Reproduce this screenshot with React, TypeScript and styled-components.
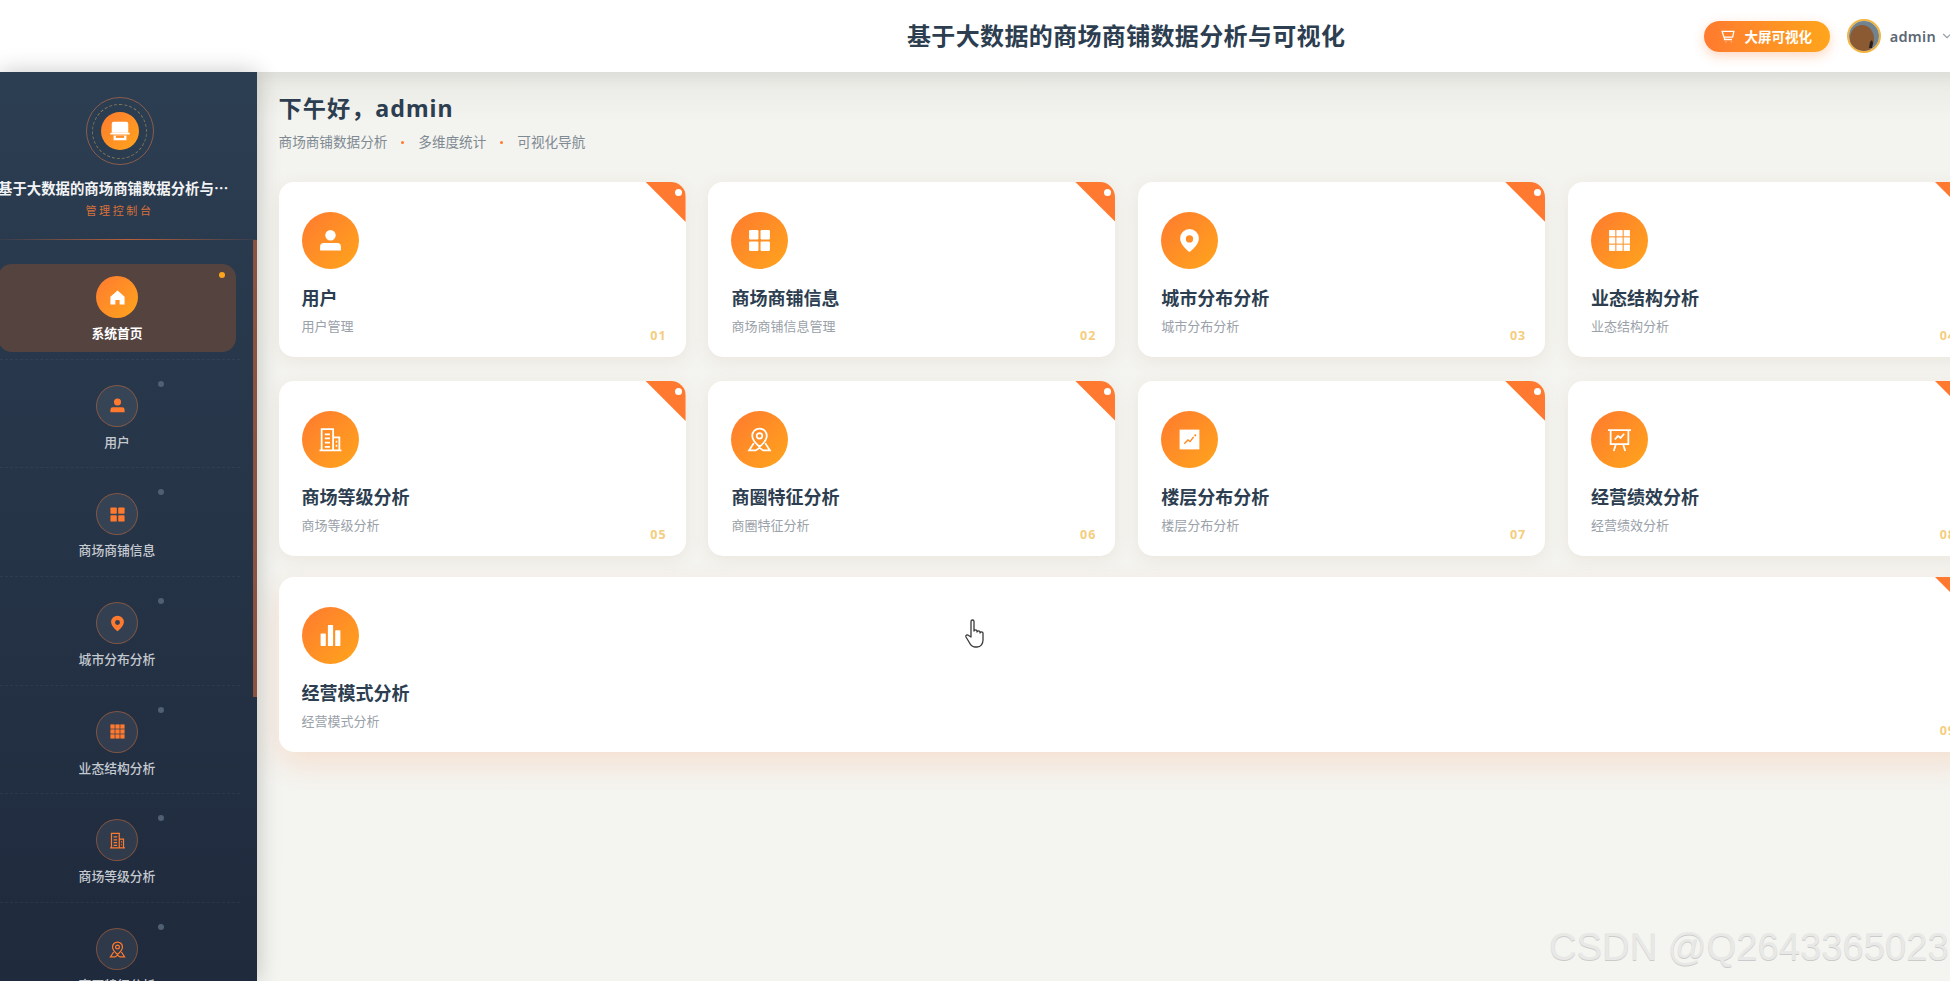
import { ChevronDown } from "lucide-react";
import type { ReactNode } from "react";
import styled, { createGlobalStyle } from "styled-components";

const GlobalStyle = createGlobalStyle`
    html, body {
        margin: 0;
        height: 100%;
        overflow: hidden;
        background: #f4f4f0;
        font-family: "Noto Sans", "Noto Sans CJK SC", sans-serif;
    }

    * {
        box-sizing: border-box;
    }
`

const Page = styled.div`
    position: relative;
    width: 2000px;
    height: 981px;
    display: flex;
    flex-direction: column;
    overflow: hidden;
`

const Header = styled.header`
    position: relative;
    z-index: 1;
    flex: none;
    height: 72px;
    display: flex;
    align-items: center;
    padding: 0 46px 0 907px;
    background: #fff;
    box-shadow: 0 2px 18px rgba(0, 0, 0, 0.08);
`

const HeaderTitle = styled.h1`
    margin: 0 auto 0 0;
    font-size: 24px;
    line-height: 32px;
    font-weight: 700;
    letter-spacing: 0.35px;
    color: #2c3e50;
    white-space: nowrap;
`

const ScreenButton = styled.button`
    width: 126px;
    height: 31px;
    margin-right: 17px;
    padding: 0;
    display: flex;
    align-items: center;
    justify-content: center;
    gap: 9px;
    border: 0;
    border-radius: 16px;
    background: linear-gradient(90deg, #ff7a2f, #ffa51c);
    box-shadow: 0 4px 12px rgba(255, 122, 47, 0.3);
    color: #fff;
    font-family: inherit;
    font-size: 13.5px;
    font-weight: 700;
`

const Avatar = styled.span`
    width: 34px;
    height: 34px;
    margin-right: 9px;
    border-radius: 50%;
    border: 2px solid #f3b53f;
    overflow: hidden;
    display: block;
`

const UserName = styled.span`
    font-size: 14.5px;
    font-weight: 600;
    letter-spacing: 0.3px;
    color: #5d6875;
    margin-right: 4px;
`

const Body = styled.div`
    flex: 1;
    min-height: 0;
    display: flex;
`

const Sidebar = styled.aside`
    position: relative;
    z-index: 2;
    flex: none;
    width: 257px;
    background: linear-gradient(180deg, #2c3e52, #1f2a3c);
    box-shadow: 0 0 22px rgba(0, 0, 0, 0.22);
    overflow: hidden;
`

const Brand = styled.div`
    width: 239px;
    height: 167px;
    padding-top: 25px;
    display: flex;
    flex-direction: column;
    align-items: center;
`

const LogoRing = styled.div`
    width: 68px;
    height: 68px;
    flex: none;
    border-radius: 50%;
    border: 1px solid rgba(255, 130, 70, 0.45);
    display: flex;
    align-items: center;
    justify-content: center;
`

const LogoDashes = styled.div`
    width: 55px;
    height: 55px;
    border-radius: 50%;
    border: 1px dashed rgba(255, 200, 90, 0.42);
    display: flex;
    align-items: center;
    justify-content: center;
`

const LogoCore = styled.div`
    width: 38px;
    height: 38px;
    border-radius: 50%;
    background: linear-gradient(135deg, #ff7a2f, #ffa51c);
    color: #fff;
    display: flex;
    align-items: center;
    justify-content: center;
`

const BrandTitle = styled.div`
    align-self: flex-start;
    width: 232px;
    margin: 13px 0 0 -2px;
    font-family: "Noto Sans CJK SC", sans-serif;
    font-size: 14.4px;
    line-height: 20px;
    font-weight: 700;
    color: #f2f3f4;
    white-space: nowrap;
    overflow: hidden;
    text-overflow: ellipsis;
`

const BrandSub = styled.div`
    margin-top: 5px;
    font-size: 11px;
    line-height: 16px;
    letter-spacing: 2.6px;
    color: #d9703a;
`

const Divider = styled.div`
    height: 1px;
    background: linear-gradient(90deg, rgba(255, 122, 47, 0.05), #b9603a 50%, rgba(255, 122, 47, 0.05));
`

const NavList = styled.nav`
    padding-top: 11px;
    width: 240px;
`

const NavRow = styled.div`
    padding: 13px 0 7px;
    border-bottom: 1px dashed rgba(255, 255, 255, 0.05);
`

const NavBox = styled.div<{ $active?: boolean }>`
    position: relative;
    width: 238px;
    height: 87.7px;
    margin-left: -2px;
    padding-top: 12px;
    display: flex;
    flex-direction: column;
    align-items: center;
    border-radius: 14px;
    background: ${(p) => (p.$active ? "#55433f" : "transparent")};
`

const NavDot = styled.span<{ $active?: boolean }>`
    position: absolute;
    top: 8px;
    left: ${(p) => (p.$active ? "221px" : "160px")};
    width: 6px;
    height: 6px;
    border-radius: 50%;
    background: ${(p) => (p.$active ? "#ffa51c" : "#4f5f74")};
`

const NavIcon = styled.span<{ $active?: boolean }>`
    width: 42px;
    height: 42px;
    flex: none;
    border-radius: 50%;
    display: flex;
    align-items: center;
    justify-content: center;
    color: ${(p) => (p.$active ? "#fff" : "#ff7a2f")};
    background: ${(p) => (p.$active ? "linear-gradient(135deg, #ff7a2f, #ffa51c)" : "rgba(255, 255, 255, 0.07)")};
    border: ${(p) => (p.$active ? "0" : "1.5px solid rgba(255, 122, 47, 0.38)")};
`

const NavLabel = styled.span<{ $active?: boolean }>`
    margin-top: 6px;
    font-size: 12.8px;
    line-height: 18px;
    font-weight: ${(p) => (p.$active ? 700 : 500)};
    color: ${(p) => (p.$active ? "#fff" : "#c5cad1")};
    white-space: nowrap;
`

const ScrollThumb = styled.span`
    position: absolute;
    top: 168px;
    right: 0;
    width: 4px;
    height: 457px;
    background: #8a5240;
`

const Main = styled.main`
    flex: 1;
    min-width: 0;
    padding: 19px 0 0 21.6px;
    background: linear-gradient(180deg, #e9e9e4 0, #f3f3ef 48px, #f4f4f0 100%);
`

const Greeting = styled.h2`
    margin: 0;
    font-size: 23.2px;
    line-height: 34px;
    font-weight: 700;
    letter-spacing: 1px;
    color: #2c3e50;
`

const Tags = styled.div`
    margin-top: 8px;
    display: flex;
    align-items: center;
    gap: 14px;
    font-size: 13.6px;
    line-height: 18px;
    color: #7f8a93;
`

const TagDot = styled.span`
    width: 3px;
    height: 3px;
    border-radius: 50%;
    background: #ff7a2f;
`

const CardGrid = styled.div`
    margin-top: 31px;
    display: grid;
    grid-template-columns: repeat(4, 407px);
    column-gap: 22.8px;
    row-gap: 24px;
`

const Card = styled.div<{ $wide?: boolean }>`
    position: relative;
    height: 175px;
    padding: 30px 23px 0;
    border-radius: 15px;
    background: #fff;
    overflow: hidden;
    grid-column: ${(p) => (p.$wide ? "1 / -1" : "auto")};
    transform: ${(p) => (p.$wide ? "translateY(-3px)" : "none")};
    box-shadow: ${(p) =>
        p.$wide ? "0 12px 28px rgba(255, 122, 47, 0.16)" : "0 4px 16px rgba(190, 150, 110, 0.12)"};
`

const Corner = styled.span`
    position: absolute;
    top: 0;
    right: 0;
    width: 40px;
    height: 40px;
    background: #ff7a30;
    clip-path: polygon(0 0, 100% 0, 100% 100%);
`

const CornerDot = styled.span`
    position: absolute;
    top: 7px;
    right: 4px;
    width: 7px;
    height: 7px;
    border-radius: 50%;
    background: #fff;
`

const CardIcon = styled.div`
    width: 57px;
    height: 57px;
    border-radius: 50%;
    display: flex;
    align-items: center;
    justify-content: center;
    color: #fff;
    background: linear-gradient(135deg, #ff7a2f, #ffa51c);
`

const CardTitle = styled.div`
    margin-top: 16px;
    font-size: 18px;
    line-height: 26px;
    font-weight: 700;
    color: #2c3e50;
`

const CardSub = styled.div`
    margin-top: 6px;
    font-size: 13px;
    line-height: 18px;
    color: #9aa1a9;
`

const CardNumber = styled.span`
    position: absolute;
    right: 19px;
    bottom: 12px;
    font-size: 12.5px;
    line-height: 18px;
    font-weight: 700;
    letter-spacing: 1px;
    color: #f5cd7e;
`

const HandCursor = styled.svg`
    position: absolute;
    left: 964px;
    top: 618px;
    z-index: 3;
`

const Watermark = styled.div`
    position: absolute;
    left: 1549px;
    top: 925px;
    z-index: 3;
    font-family: "Liberation Sans", Arial, sans-serif;
    font-size: 38.2px;
    line-height: 44px;
    color: #e8e8e6;
    text-shadow: 0 1px 0 #cbcbcb;
    white-space: nowrap;
`

type IconProps = { size: number };

const Glyph = ({ size, children }: IconProps & { children: ReactNode }) => (
    <svg width={size} height={size} viewBox="0 0 24 24" fill="currentColor">
        {children}
    </svg>
);

const UserIcon = ({ size }: IconProps) => (
    <Glyph size={size}>
        <circle cx="12" cy="7" r="5" />
        <path d="M5.500 14.500h13a3.500 3.500 0 0 1 3.500 3.500v3.500H2V18a3.500 3.500 0 0 1 3.500-3.500z" />
    </Glyph>
);

const AppsIcon = ({ size }: IconProps) => (
    <Glyph size={size}>
        <rect x="2" y="2" width="9" height="9" rx="1" />
        <rect x="13" y="2" width="9" height="9" rx="1" />
        <rect x="2" y="13" width="9" height="9" rx="1" />
        <rect x="13" y="13" width="9" height="9" rx="1" />
    </Glyph>
);

const PinIcon = ({ size }: IconProps) => (
    <Glyph size={size}>
        <path
            fillRule="evenodd"
            d="M12 1a9 9 0 0 1 9 9c0 5-5.500 10.500-9 13-3.500-2.500-9-8-9-13a9 9 0 0 1 9-9zm0 6a3.500 3.500 0 1 0 0 7 3.500 3.500 0 0 0 0-7z"
        />
    </Glyph>
);

const GridIcon = ({ size }: IconProps) => (
    <Glyph size={size}>
        {[2, 9, 16].map((y) =>
            [2, 9, 16].map((x) => <rect key={`${x}-${y}`} x={x} y={y} width="6" height="6" />)
        )}
    </Glyph>
);

const BuildingIcon = ({ size }: IconProps) => (
    <Glyph size={size}>
        <path
            fill="none"
            stroke="currentColor"
            strokeWidth="1.700"
            d="M1.500 22.500h21M3.500 22.500V2h11v20.500M14.500 10h6v12.500M6.500 7h5M6.500 11h5M6.500 15h5M6.500 19h5M17 14h1.500M17 18h1.500"
        />
    </Glyph>
);

const RegionIcon = ({ size }: IconProps) => (
    <Glyph size={size}>
        <path
            fill="none"
            stroke="currentColor"
            strokeWidth="1.700"
            d="M12 1.500a7 7 0 0 1 7 7c0 4-4 8-7 10.500-3-2.500-7-6.500-7-10.500a7 7 0 0 1 7-7zM12 5.800a2.700 2.700 0 1 0 0 5.400 2.700 2.700 0 0 0 0-5.400zM6.500 15.500l-4.500 7h6.500l3.500-2.500 3.500 2.500H22l-4.500-7"
        />
    </Glyph>
);

const ChartIcon = ({ size }: IconProps) => (
    <Glyph size={size}>
        <rect x="2.500" y="2.500" width="19" height="19" />
        <path fill="none" stroke="#ff8a25" strokeWidth="1.400" d="M7 16l3.500-3.500 2 1.500 3.500-4.500" />
        <circle cx="17.500" cy="8" r="1" fill="#ff8a25" />
    </Glyph>
);

const BoardIcon = ({ size }: IconProps) => (
    <Glyph size={size}>
        <path
            fill="none"
            stroke="currentColor"
            strokeWidth="1.700"
            d="M1 3h22M3.500 3v13.500h17V3M8.500 16.500L6.500 23M15.500 16.500l2 6.500M7.500 12l3-3.500 2.500 2 3.500-4"
        />
    </Glyph>
);

const BarsIcon = ({ size }: IconProps) => (
    <Glyph size={size}>
        <rect x="2.500" y="10" width="5" height="12" rx="0.600" />
        <rect x="9.500" y="2" width="5" height="20" rx="0.600" />
        <rect x="16.500" y="7" width="5" height="15" rx="0.600" />
    </Glyph>
);

const HomeIcon = ({ size }: IconProps) => (
    <Glyph size={size}>
        <path d="M12 2L2 11v11h7v-6.500h6V22h7V11z" />
    </Glyph>
);

const StoreIcon = ({ size }: IconProps) => (
    <Glyph size={size}>
        <path d="M5 2h14a2 2 0 0 1 2 2v10H3V4a2 2 0 0 1 2-2z" />
        <path d="M1.500 14h21v1.800h-21zM5 17h14v5H5z" />
        <rect x="7.500" y="17" width="9" height="2.500" fill="#ff8d25" />
    </Glyph>
);

const CartIcon = ({ size }: IconProps) => (
    <svg width={size} height={size} viewBox="0 0 24 24" fill="none" stroke="currentColor" strokeWidth="2.200">
        <path d="M2 4h20l-2 10H5zM6 14v4h13M8 22h1M17 22h1" />
    </svg>
);

const cards = [
    { title: "用户", sub: "用户管理", Icon: UserIcon },
    { title: "商场商铺信息", sub: "商场商铺信息管理", Icon: AppsIcon },
    { title: "城市分布分析", sub: "城市分布分析", Icon: PinIcon },
    { title: "业态结构分析", sub: "业态结构分析", Icon: GridIcon },
    { title: "商场等级分析", sub: "商场等级分析", Icon: BuildingIcon },
    { title: "商圈特征分析", sub: "商圈特征分析", Icon: RegionIcon },
    { title: "楼层分布分析", sub: "楼层分布分析", Icon: ChartIcon },
    { title: "经营绩效分析", sub: "经营绩效分析", Icon: BoardIcon },
    { title: "经营模式分析", sub: "经营模式分析", Icon: BarsIcon },
];

const navItems = [{ title: "系统首页", Icon: HomeIcon }, ...cards];

export default function App() {
    return (
        <Page>
            <GlobalStyle />
            <Header>
                <HeaderTitle>基于大数据的商场商铺数据分析与可视化</HeaderTitle>
                <ScreenButton>
                    <CartIcon size={14} />
                    大屏可视化
                </ScreenButton>
                <Avatar>
                    <svg width="30" height="30" viewBox="0 0 30 30">
                        <rect width="30" height="30" fill="#71838f" />
                        <ellipse cx="13" cy="18" rx="12" ry="14" fill="#8b5a33" />
                        <path d="M20 27l1-6 2-2 1 3-1 5z" fill="#2b1d17" />
                    </svg>
                </Avatar>
                <UserName>admin</UserName>
                <ChevronDown size={14} color="#9aa1a9" />
            </Header>
            <Body>
                <Sidebar>
                    <Brand>
                        <LogoRing>
                            <LogoDashes>
                                <LogoCore>
                                    <StoreIcon size={22} />
                                </LogoCore>
                            </LogoDashes>
                        </LogoRing>
                        <BrandTitle>基于大数据的商场商铺数据分析与可视化</BrandTitle>
                        <BrandSub>管理控制台</BrandSub>
                    </Brand>
                    <Divider />
                    <NavList>
                        {navItems.map(({ title, Icon }, i) => (
                            <NavRow key={title}>
                                <NavBox $active={i === 0}>
                                    <NavDot $active={i === 0} />
                                    <NavIcon $active={i === 0}>
                                        <Icon size={17} />
                                    </NavIcon>
                                    <NavLabel $active={i === 0}>{title}</NavLabel>
                                </NavBox>
                            </NavRow>
                        ))}
                    </NavList>
                    <ScrollThumb />
                </Sidebar>
                <Main>
                    <Greeting>下午好，admin</Greeting>
                    <Tags>
                        <span>商场商铺数据分析</span>
                        <TagDot />
                        <span>多维度统计</span>
                        <TagDot />
                        <span>可视化导航</span>
                    </Tags>
                    <CardGrid>
                        {cards.map(({ title, sub, Icon }, i) => (
                            <Card key={title} $wide={i === 8}>
                                <Corner />
                                <CornerDot />
                                <CardIcon>
                                    <Icon size={25} />
                                </CardIcon>
                                <CardTitle>{title}</CardTitle>
                                <CardSub>{sub}</CardSub>
                                <CardNumber>{String(i + 1).padStart(2, "0")}</CardNumber>
                            </Card>
                        ))}
                    </CardGrid>
                </Main>
            </Body>
            <HandCursor width="24" height="32" viewBox="0 0 24 32">
                <path
                    d="M7 3.500a1.500 1.500 0 0 1 3 0V13c0-1.500 3-1.500 3 0v1c0-1.500 3-1.500 3 0v1c0-1.500 3-1.500 3 0v7c0 3.500-2 7-6 7h-2c-3 0-4.500-2-6-5l-3-5c-.8-1.500 1.200-3 2.500-1.500L7 19z"
                    fill="#fff"
                    stroke="#3a3a3a"
                    strokeWidth="1.300"
                    strokeLinejoin="round"
                />
            </HandCursor>
            <Watermark>CSDN @Q2643365023</Watermark>
        </Page>
    );
}
